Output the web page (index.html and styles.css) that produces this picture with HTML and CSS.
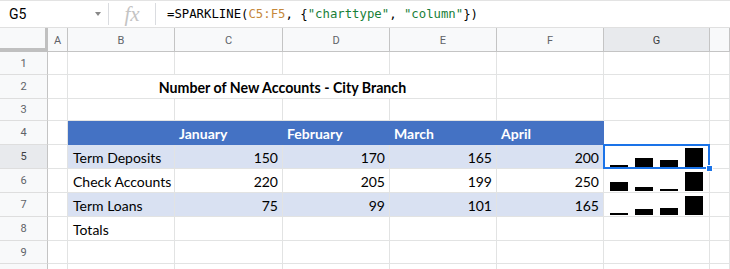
FILE: index.html
```html
<!DOCTYPE html>
<html lang="en">
<head>
  <meta charset="UTF-8"/>
  <title>Sparkline – Sheet</title>
  <link rel="stylesheet" href="styles.css">
</head>
<body>

  <div class="fbar">
    <div class="namebox"><span>G5</span><span class="caret"></span></div>
    <div class="sep"></div>
    <div class="fx">fx</div>
    <div class="sep"></div>
    <div class="formula">=SPARKLINE(<span class="ref">C5:F5</span>, {<span class="str">"charttype"</span>, <span class="str">"column"</span>})</div>
  </div>

  <div class="sheet">
    <!-- column headers -->
    <div class="corner"></div>
    <div class="ch">A</div><div class="ch">B</div><div class="ch">C</div><div class="ch">D</div>
    <div class="ch">E</div><div class="ch">F</div><div class="ch sel">G</div><div class="ch"></div>

    <!-- 1 -->
    <div class="rh">1</div>
    <div class="c"></div><div class="c"></div><div class="c"></div><div class="c"></div>
    <div class="c"></div><div class="c"></div><div class="c"></div><div class="c"></div>

    <!-- 2 -->
    <div class="rh">2</div>
    <div class="c"></div>
    <div class="c title">Number of New Accounts - City Branch</div>
    <div class="c"></div><div class="c"></div><div class="c"></div>

    <!-- 3 -->
    <div class="rh">3</div>
    <div class="c"></div><div class="c"></div><div class="c"></div><div class="c"></div>
    <div class="c"></div><div class="c"></div><div class="c"></div><div class="c"></div>

    <!-- 4 -->
    <div class="rh">4</div>
    <div class="c"></div>
    <div class="c th"></div><div class="c th">January</div><div class="c th">February</div>
    <div class="c th">March</div><div class="c th">April</div>
    <div class="c"></div><div class="c"></div>

    <!-- 5 -->
    <div class="rh sel">5</div>
    <div class="c"></div>
    <div class="c band">Term Deposits</div>
    <div class="c band num">150</div><div class="c band num">170</div>
    <div class="c band num">165</div><div class="c band num">200</div>
    <div class="c spark active">
      <i style="height:2px"></i><i style="height:9px"></i><i style="height:7px"></i><i style="height:19px"></i>
      <span class="handle"></span>
    </div>
    <div class="c"></div>

    <!-- 6 -->
    <div class="rh">6</div>
    <div class="c"></div>
    <div class="c">Check Accounts</div>
    <div class="c num">220</div><div class="c num">205</div>
    <div class="c num">199</div><div class="c num">250</div>
    <div class="c spark">
      <i style="height:9px"></i><i style="height:4px"></i><i style="height:2px"></i><i style="height:19px"></i>
    </div>
    <div class="c"></div>

    <!-- 7 -->
    <div class="rh">7</div>
    <div class="c"></div>
    <div class="c band">Term Loans</div>
    <div class="c band num">75</div><div class="c band num">99</div>
    <div class="c band num">101</div><div class="c band num">165</div>
    <div class="c spark">
      <i style="height:2px"></i><i style="height:6px"></i><i style="height:7px"></i><i style="height:19px"></i>
    </div>
    <div class="c"></div>

    <!-- 8 -->
    <div class="rh">8</div>
    <div class="c"></div>
    <div class="c">Totals</div>
    <div class="c"></div><div class="c"></div><div class="c"></div>
    <div class="c"></div><div class="c"></div><div class="c"></div>

    <!-- 9 -->
    <div class="rh">9</div>
    <div class="c"></div><div class="c"></div><div class="c"></div><div class="c"></div>
    <div class="c"></div><div class="c"></div><div class="c"></div><div class="c"></div>

    <!-- 10, only its top edge shows -->
    <div class="rh"></div>
    <div class="c"></div><div class="c"></div><div class="c"></div><div class="c"></div>
    <div class="c"></div><div class="c"></div><div class="c"></div><div class="c"></div>
  </div>

</body>
</html>
```

FILE: styles.css
```css
*{box-sizing:border-box;margin:0;padding:0}
body{background:#fff;overflow:hidden;font-family:Roboto,'Liberation Sans',sans-serif}

/* formula bar */
.fbar{height:28px;display:flex;align-items:center;border-top:1px solid #e3e3e3;border-bottom:1px solid #e0e0e0}
.namebox{width:108px;display:flex;align-items:center;padding-left:9px;font-size:14px;color:#000}
.namebox span:first-child{flex:1}
.caret{width:0;height:0;border-left:3px solid transparent;border-right:3px solid transparent;border-top:4px solid #888;margin-right:7px}
.sep{width:1px;height:22px;background:#dadce0}
.fx{width:46px;text-align:center;font-family:'Liberation Serif',serif;font-style:italic;font-size:21px;color:#c4c4c4;line-height:1}
.formula{padding-left:11px;font-family:'DejaVu Sans Mono',monospace;font-size:12.3px;color:#000;white-space:nowrap}
.formula .ref{color:#c5883b}
.formula .str{color:#188038}

/* grid */
.sheet{display:grid;grid-template-columns:48px 20px 107px 108px 107px 107px 107px 106px 1fr;
  grid-template-rows:24px 23px 24px 22px 24px 24px 24px 24px 24px 23px 24px}
.corner{background:#f8f9fa;border-right:3px solid #c0c0c0;border-bottom:4px solid #c0c0c0}
.ch,.rh{background:#f8f9fa;color:#5f6368;font-size:11px;display:flex;align-items:center;justify-content:center;
  border-right:1px solid #c4c4c4;border-bottom:1px solid #c4c4c4}
.ch{padding-top:1px}
.rh{border-bottom-color:#dedede}
.ch.sel,.rh.sel{background:#e8eaed;color:#3c4043}

.c{border-right:1px solid #e2e3e3;border-bottom:1px solid #e2e3e3;display:flex;align-items:center;padding:1px 4px 0 5px;
  font-family:Lato,'Liberation Sans',sans-serif;font-size:14px;color:#000;white-space:nowrap;position:relative}
.c.num{justify-content:flex-end}
.c.title{grid-column:span 4;justify-content:center;font-weight:bold;font-size:14.2px}
.c.th{background:#4472c4;color:#fff;font-weight:bold;border-color:#4472c4;padding-left:4px}
.c.band{background:#d9e1f2}

.spark{align-items:flex-end;gap:7px;padding:0 6px 1px 6px}
.spark i{display:block;width:18px;background:#000}
.active::after{content:'';position:absolute;top:-1px;left:-1px;right:-1px;bottom:-1px;border:2px solid #1a73e8}
.handle{position:absolute;right:-4px;bottom:-4px;width:7px;height:7px;background:#1a73e8;border:1px solid #fff;z-index:2}
```
